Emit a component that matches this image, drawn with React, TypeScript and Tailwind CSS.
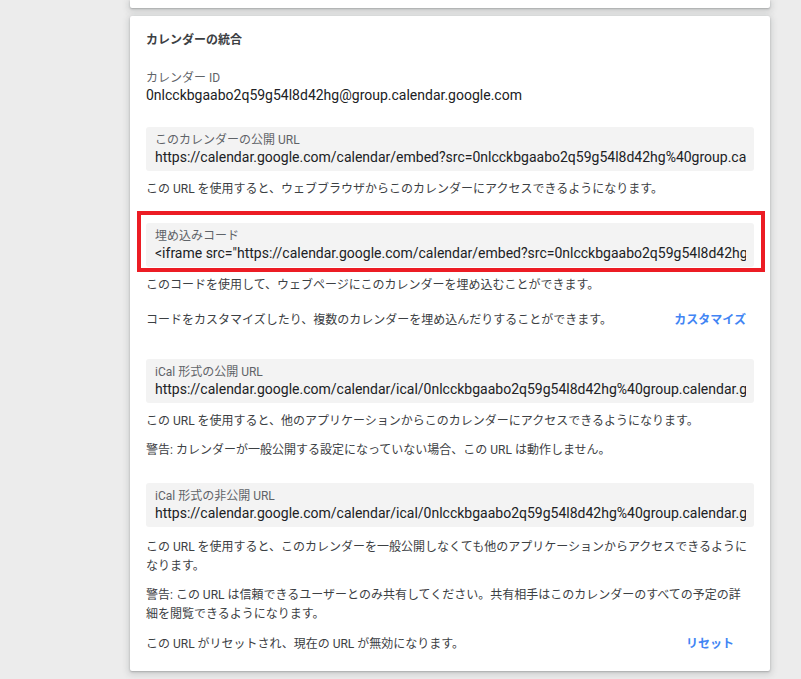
import React from 'react';

const font = { fontFamily: 'Roboto, "Noto Sans CJK JP", sans-serif' };

const calId = '0nlcckbgaabo2q59g54l8d42hg';

type FieldProps = { label: string; value: string };

const Field: React.FC<FieldProps> = ({ label, value }) => (
  <div className="bg-[#f3f3f3] rounded-[3px] pl-[9px] pr-[8px] pt-[5px] pb-[5px]">
    <div className="text-[12px] leading-[16px] text-[#5f6368]">{label}</div>
    <div className="overflow-hidden whitespace-nowrap text-[14px] leading-[18px] text-[#202124]">{value}</div>
  </div>
);

export default function App() {
  return (
    <div className="min-h-[679px] bg-[#ececec] overflow-hidden" style={font}>
      {/* previous settings card, mostly scrolled away */}
      <div className="ml-[130px] w-[640px] h-[8px] bg-white rounded-b-[2px] shadow-[0_1px_2px_rgba(60,64,67,0.3),0_2px_6px_2px_rgba(60,64,67,0.15)]" />

      {/* Calendar integration card */}
      <div className="ml-[130px] mt-[8px] w-[640px] bg-white rounded-[2px] px-[16px] pt-[16px] pb-[17px] shadow-[0_1px_2px_rgba(60,64,67,0.3),0_2px_6px_2px_rgba(60,64,67,0.15)]">
        <h2 className="text-[12px] leading-[16px] font-bold text-[#3c4043]">カレンダーの統合</h2>

        <div className="mt-[22px] text-[12px] leading-[16px] text-[#5f6368]">カレンダー ID</div>
        <div className="text-[14px] leading-[18px] text-[#202124]">{calId}@group.calendar.google.com</div>

        <div className="mt-[23px]">
          <Field
            label="このカレンダーの公開 URL"
            value={`https://calendar.google.com/calendar/embed?src=${calId}%40group.calendar.google.com&ctz=Asia%2FTokyo`}
          />
        </div>
        <p className="mt-[9px] pr-[6px] text-[12px] leading-[19px] text-[#3c4043]">
          この URL を使用すると、ウェブブラウザからこのカレンダーにアクセスできるようになります。
        </p>

        {/* embed code, highlighted */}
        <div className="relative mt-[24px]">
          <Field
            label="埋め込みコード"
            value={`<iframe src="https://calendar.google.com/calendar/embed?src=${calId}%40group.calendar.google.com&ctz=Asia%2FTokyo" style="border: 0" width="800" height="600" frameborder="0" scrolling="no"></iframe>`}
          />
          <div className="absolute left-[-9px] right-[-11px] top-[-12px] bottom-[-5px] border-[4px] border-[#ec1c24] pointer-events-none" />
        </div>
        <p className="mt-[9px] pr-[6px] text-[12px] leading-[19px] text-[#3c4043]">
          このコードを使用して、ウェブページにこのカレンダーを埋め込むことができます。
        </p>
        <div className="mt-[16px] flex items-center justify-between text-[12px] leading-[19px] text-[#3c4043]">
          <span>コードをカスタマイズしたり、複数のカレンダーを埋め込んだりすることができます。</span>
          <button className="px-[8px] font-bold text-[#4285f4]">カスタマイズ</button>
        </div>

        <div className="mt-[29px]">
          <Field
            label="iCal 形式の公開 URL"
            value={`https://calendar.google.com/calendar/ical/${calId}%40group.calendar.google.com/public/basic.ics`}
          />
        </div>
        <p className="mt-[9px] pr-[6px] text-[12px] leading-[19px] text-[#3c4043]">
          この URL を使用すると、他のアプリケーションからこのカレンダーにアクセスできるようになります。
        </p>
        <p className="mt-[10px] pr-[6px] text-[12px] leading-[19px] text-[#3c4043]">
          警告: カレンダーが一般公開する設定になっていない場合、この URL は動作しません。
        </p>

        <div className="mt-[23px]">
          <Field
            label="iCal 形式の非公開 URL"
            value={`https://calendar.google.com/calendar/ical/${calId}%40group.calendar.google.com/private-3c8f1e2a9b7d4f60a1e5c2d8b4f7a913/basic.ics`}
          />
        </div>
        <p className="mt-[11px] pr-[6px] text-[12px] leading-[19px] text-[#3c4043]">
          この URL を使用すると、このカレンダーを一般公開しなくても他のアプリケーションからアクセスできるようになります。
        </p>
        <p className="mt-[10px] pr-[6px] text-[12px] leading-[19px] text-[#3c4043]">
          警告: この URL は信頼できるユーザーとのみ共有してください。共有相手はこのカレンダーのすべての予定の詳細を閲覧できるようになります。
        </p>
        <div className="mt-[11px] flex items-center justify-between text-[12px] leading-[19px] text-[#3c4043]">
          <span>この URL がリセットされ、現在の URL が無効になります。</span>
          <button className="px-[20px] font-bold text-[#4285f4]">リセット</button>
        </div>
      </div>
    </div>
  );
}
